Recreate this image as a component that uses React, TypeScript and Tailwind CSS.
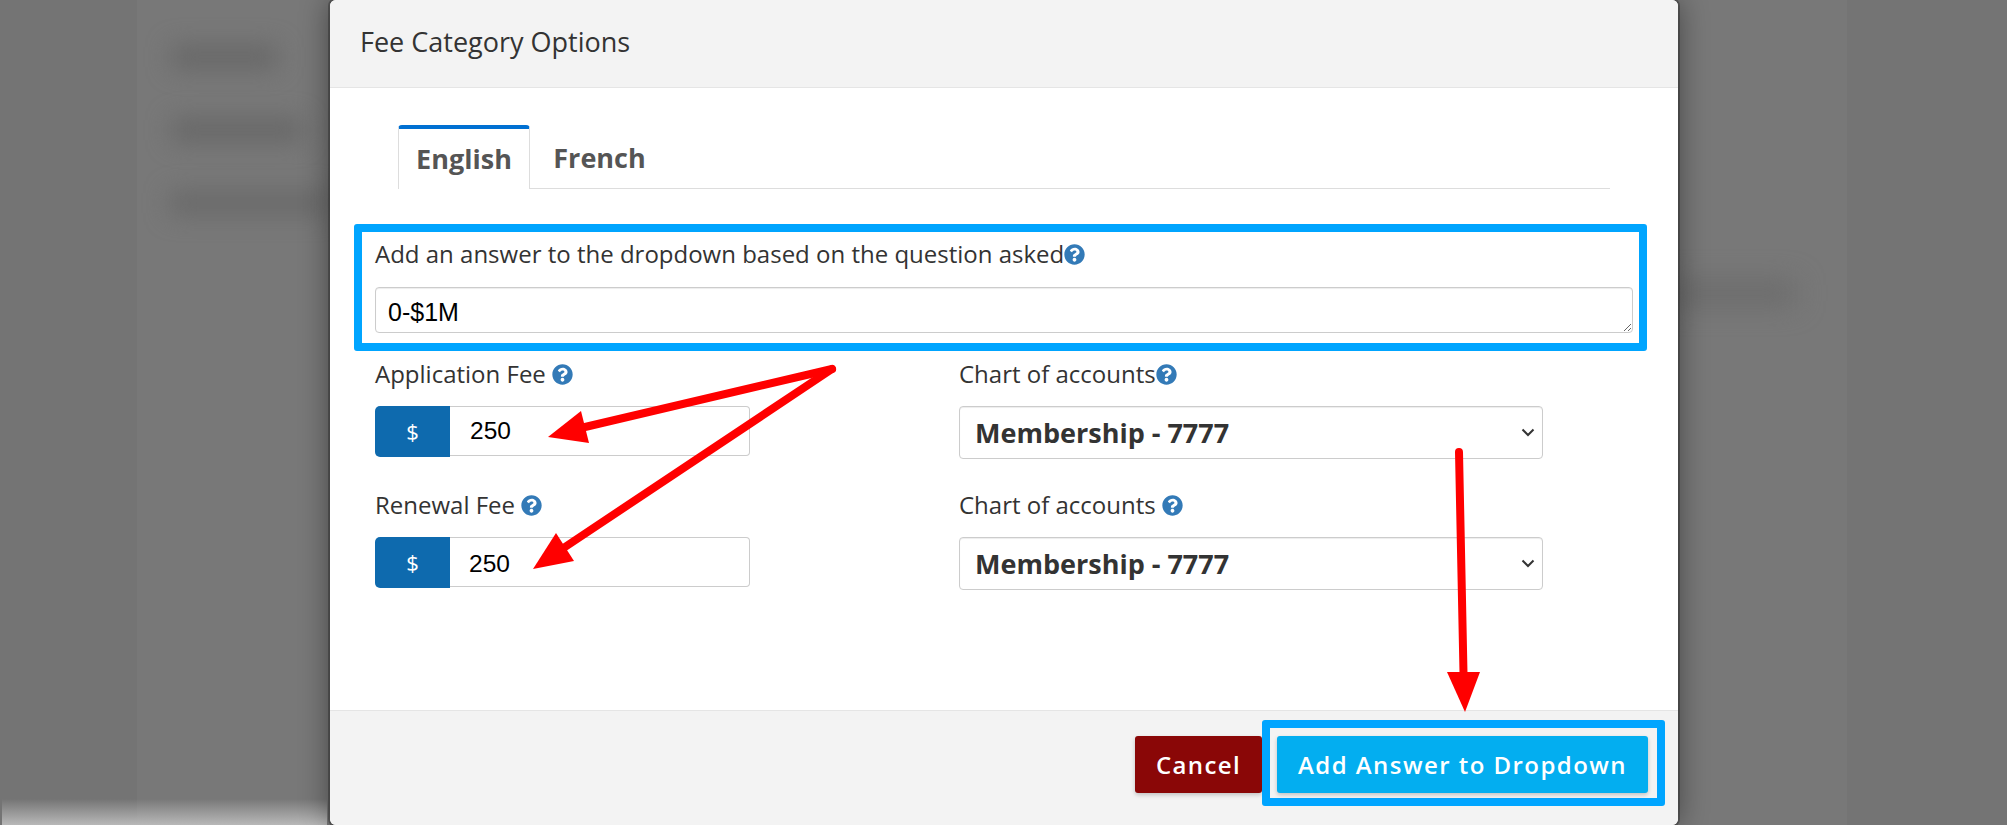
import { FaQuestionCircle } from 'react-icons/fa'

const sans = { fontFamily: '"Open Sans", sans-serif' }

function Help({ className = '' }: { className?: string }) {
  return <FaQuestionCircle className={`inline-block shrink-0 text-[21px] text-[#337ab7] ${className}`} />
}

function FeeInput({ value, className = '' }: { value: string; className?: string }) {
  return (
    <div className="flex h-[51px] w-[375px] items-start">
      <span className="flex h-[51px] w-[75px] shrink-0 items-center justify-center rounded-l-[5px] bg-[#0e6aae] text-[22px] text-white">
        $
      </span>
      <input
        defaultValue={value}
        className={`h-[50px] w-[300px] min-w-0 rounded-r-[4px] border border-l-0 border-[#ccc] font-['Liberation_Sans',sans-serif] text-[24.5px] text-black outline-none ${className}`}
      />
    </div>
  )
}

function AccountSelect() {
  return (
    <div className="relative h-[53px] w-[584px]">
      <select className="h-[53px] w-full appearance-none rounded-[4px] border border-[#ccc] bg-white pl-[15px] pt-[2px] text-[27px] font-bold text-[#333] shadow-[inset_0_1px_1px_rgba(0,0,0,0.075)] outline-none">
        <option>Membership - 7777</option>
      </select>
      <svg className="pointer-events-none absolute right-[8px] top-[22px]" width="14" height="9" viewBox="0 0 14 9" fill="none">
        <path d="M1.5 1.5 L7 7 L12.5 1.5" stroke="#333" strokeWidth="2" />
      </svg>
    </div>
  )
}

function Arrows() {
  return (
    <svg className="pointer-events-none absolute inset-0" width="2007" height="825" viewBox="0 0 2007 825">
      <g stroke="#ff0000" strokeWidth="8" strokeLinecap="round" fill="none">
        <path d="M832 369 L585 427" />
        <path d="M832 369 L565 547" />
        <path d="M1459 452 L1463.5 673" />
      </g>
      <g fill="#ff0000">
        <polygon points="548,437 581,411 589,443" />
        <polygon points="533,569 556,533 574,561" />
        <polygon points="1465,712 1447,672 1480,672" />
      </g>
    </svg>
  )
}

export default function App() {
  return (
    <div className="relative h-[825px] w-[2007px] overflow-hidden bg-[#747474]" style={sans}>
      {/* dimmed page behind the modal */}
      <div className="absolute inset-y-0 left-[137px] w-[1710px] bg-[#787878]" />
      <div className="absolute left-[172px] top-[46px] h-[22px] w-[105px] bg-[#666] blur-[12px]" />
      <div className="absolute left-[172px] top-[119px] h-[22px] w-[130px] bg-[#666] blur-[12px]" />
      <div className="absolute left-[170px] top-[192px] h-[22px] w-[160px] bg-[#686868] blur-[12px]" />
      <div className="absolute left-[1670px] top-[282px] h-[22px] w-[125px] bg-[#6a6a6a] blur-[14px]" />
      <div className="absolute bottom-0 left-[2px] h-[26px] w-[325px] bg-gradient-to-b from-transparent to-[#b8b8b8]" />

      {/* modal */}
      <div className="relative ml-[330px] flex h-[825px] w-[1348px] flex-col overflow-hidden rounded-[6px] bg-white shadow-[0_0_0_2px_rgba(0,0,0,0.25),0_0_30px_rgba(0,0,0,0.45)]">
        <div className="flex h-[88px] shrink-0 items-center border-b border-[#e5e5e5] bg-[#f3f3f3] pb-[2px] pl-[30px] text-[27px] text-[#333]">
          Fee Category Options
        </div>

        <div className="flex-1">
          {/* tabs */}
          <div className="ml-[68px] mt-[37px] flex h-[64px] w-[1212px] border-b border-[#ddd]">
            <div className="flex h-[64px] w-[132px] items-center justify-center rounded-t-[4px] border-x border-t-4 border-x-[#ddd] border-t-[#0070d2] bg-white text-[27px] font-bold text-[#555]">
              English
            </div>
            <div className="flex h-[64px] w-[139px] items-center justify-center pt-[2px] text-[27px] font-bold text-[#555]">
              French
            </div>
          </div>

          {/* highlighted answer field */}
          <div className="ml-[24px] mt-[35px] h-[127px] w-[1293px] rounded-[3px] border-8 border-[#00a5ff] pl-[13px] pr-[6px]">
            <label className="flex h-[55px] items-center pb-[11px] text-[24px] text-[#333]">
              Add an answer to the dropdown based on the question asked
              <Help />
            </label>
            <textarea
              defaultValue="0-$1M"
              className="block h-[46px] w-full rounded-[4px] border border-[#ccc] px-[12px] pt-[7px] font-['Liberation_Sans',sans-serif] text-[25px] leading-[34px] text-black shadow-[inset_0_1px_1px_rgba(0,0,0,0.075)] outline-none"
            />
          </div>

          {/* fees and accounts */}
          <div className="ml-[45px] mt-[11px] grid grid-cols-[375px_584px] gap-x-[209px]">
            <div className="h-[131px]">
              <label className="mb-[18px] flex h-[26px] items-center gap-[6px] pb-[2px] text-[24px] text-[#333]">
                Application Fee <Help />
              </label>
              <FeeInput value="250" className="pl-[20px]" />
            </div>
            <div className="h-[131px]">
              <label className="mb-[18px] flex h-[26px] items-center pb-[2px] text-[24px] text-[#333]">
                Chart of accounts
                <Help />
              </label>
              <AccountSelect />
            </div>
            <div className="h-[131px]">
              <label className="mb-[18px] flex h-[26px] items-center gap-[6px] pb-[2px] text-[24px] text-[#333]">
                Renewal Fee <Help />
              </label>
              <FeeInput value="250" className="pl-[19px] pt-[4px]" />
            </div>
            <div className="h-[131px]">
              <label className="mb-[18px] flex h-[26px] items-center gap-[6px] pb-[2px] text-[24px] text-[#333]">
                Chart of accounts <Help />
              </label>
              <AccountSelect />
            </div>
          </div>
        </div>

        {/* footer */}
        <div className="flex h-[115px] shrink-0 items-start justify-end border-t border-[#e5e5e5] bg-[#f3f3f3] pr-[13px] pt-[9px]">
          <button className="mt-[16px] flex h-[57px] w-[127px] items-center justify-center rounded-[3px] bg-[#8a0707] text-[24px] font-semibold tracking-[1.4px] text-white shadow-[0_2px_4px_rgba(0,0,0,0.2)]">
            Cancel
          </button>
          <div className="h-[86px] w-[403px] rounded-[3px] border-8 border-[#00a5ff] pl-[7px] pt-[8px]">
            <button className="flex h-[57px] w-[371px] items-center justify-center rounded-[3px] bg-[#03aef0] text-[24px] font-semibold tracking-[1.45px] text-white shadow-[0_2px_4px_rgba(0,0,0,0.2)]">
              Add Answer to Dropdown
            </button>
          </div>
        </div>
      </div>

      <Arrows />
    </div>
  )
}
